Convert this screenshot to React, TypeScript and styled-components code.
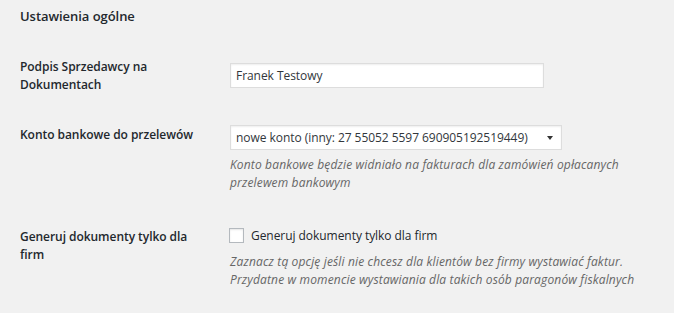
import React from 'react';
import styled, { createGlobalStyle } from 'styled-components';

const GlobalStyle = createGlobalStyle`
  html, body {
    margin: 0;
    padding: 0;
    background: #f1f1f1;
  }
  body {
    font-family: "Open Sans", "Noto Sans", "Liberation Sans", sans-serif;
    font-size: 12px;
    letter-spacing: -0.05px;
    color: #23282d;
  }
`;

const Page = styled.div`
  padding: 6px 20px 20px;
  width: 674px;
  height: 313px;
  box-sizing: border-box;
  overflow: hidden;
`;

const Heading = styled.h2`
  margin: 0;
  font-size: 13px;
  line-height: 20px;
  font-weight: 600;
  color: #23282d;
`;

const FormTable = styled.div`
  display: flex;
  flex-direction: column;
`;

interface RowProps {
  $top: number;
  $labelTop?: number;
  $fieldTop?: number;
}

const Row = styled.div<RowProps>`
  display: grid;
  grid-template-columns: 200px 1fr;
  column-gap: 10px;
  margin-top: ${p => p.$top}px;
  align-items: start;

  > :first-child {
    margin-top: ${p => p.$labelTop ?? 0}px;
  }
  > :last-child {
    margin-top: ${p => p.$fieldTop ?? 0}px;
  }
`;

const Label = styled.label`
  max-width: 176px;
  font-weight: 600;
  line-height: 18px;
`;

const Field = styled.div`
  display: flex;
  flex-direction: column;
  align-items: flex-start;
`;

const TextInput = styled.input`
  box-sizing: border-box;
  width: 314px;
  height: 25px;
  margin: 0;
  padding: 0 5px;
  border: 1px solid #ddd;
  box-shadow: inset 0 1px 2px rgba(0, 0, 0, 0.07);
  background: #fff;
  font: inherit;
  letter-spacing: inherit;
  color: #32373c;
  outline: none;
`;

const SelectBox = styled.div`
  position: relative;
  box-sizing: border-box;
  width: 332px;
  height: 25px;
  padding: 0 5px;
  border: 1px solid #ddd;
  box-shadow: inset 0 1px 2px rgba(0, 0, 0, 0.07);
  background: #fff;
  color: #32373c;
  display: flex;
  align-items: center;
  white-space: nowrap;
`;

const SelectArrow = styled.span`
  position: absolute;
  right: 8px;
  top: 10px;
  width: 0;
  height: 0;
  border-left: 3px solid transparent;
  border-right: 3px solid transparent;
  border-top: 4px solid #333;
`;

const Description = styled.p<{ $gap: number }>`
  margin: ${p => p.$gap}px 0 0;
  font-style: italic;
  line-height: 18px;
  letter-spacing: 0.15px;
  color: #666;
  white-space: nowrap;
`;

const CheckRow = styled.label`
  display: flex;
  align-items: center;
  gap: 7px;
  height: 16px;
  margin-left: -1px;
`;

const CheckBox = styled.span`
  box-sizing: border-box;
  width: 15px;
  height: 15px;
  border: 1px solid #b4b9be;
  background: #fff;
  box-shadow: inset 0 1px 2px rgba(0, 0, 0, 0.1);
`;

export default function App() {
  return (
    <>
      <GlobalStyle />
      <Page>
        <Heading>Ustawienia ogólne</Heading>
        <FormTable>
          <Row $top={32} $fieldTop={5}>
            <Label>Podpis Sprzedawcy na Dokumentach</Label>
            <Field>
              <TextInput defaultValue="Franek Testowy" />
            </Field>
          </Row>
          <Row $top={31} $labelTop={1}>
            <Label>Konto bankowe do przelewów</Label>
            <Field>
              <SelectBox>
                nowe konto (inny: 27 55052 5597 690905192519449)
                <SelectArrow />
              </SelectBox>
              <Description $gap={6}>
                Konto bankowe będzie widniało na fakturach dla zamówień opłacanych
                <br />
                przelewem bankowym
              </Description>
            </Field>
          </Row>
          <Row $top={35} $labelTop={1}>
            <Label>Generuj dokumenty tylko dla firm</Label>
            <Field>
              <CheckRow>
                <CheckBox />
                Generuj dokumenty tylko dla firm
              </CheckRow>
              <Description $gap={10}>
                Zaznacz tą opcję jeśli nie chcesz dla klientów bez firmy wystawiać faktur.
                <br />
                Przydatne w momencie wystawiania dla takich osób paragonów fiskalnych
              </Description>
            </Field>
          </Row>
        </FormTable>
      </Page>
    </>
  );
}
